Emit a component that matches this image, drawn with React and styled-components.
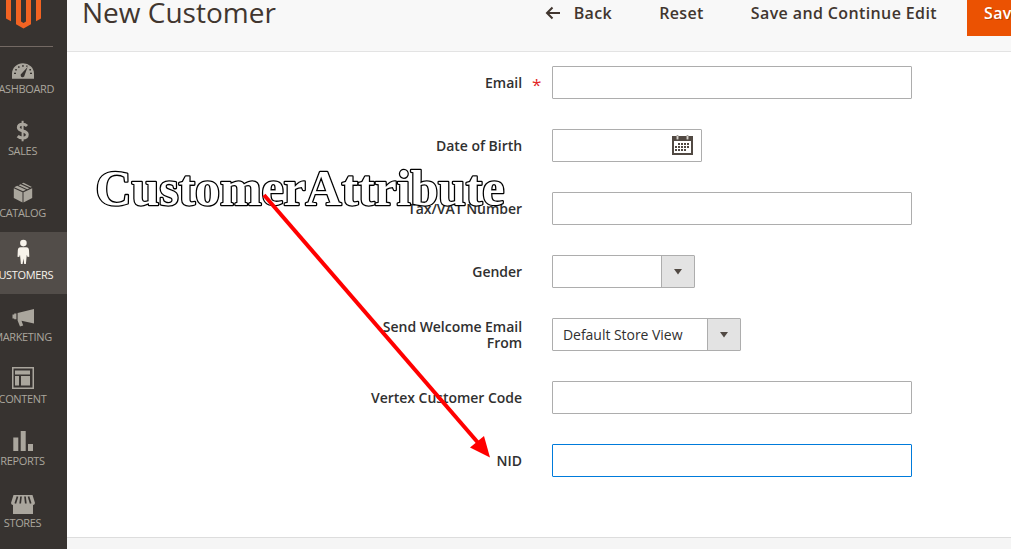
import React from 'react';
import styled, { createGlobalStyle } from 'styled-components';

const Global = createGlobalStyle`
  * { box-sizing: border-box; }
  html, body { margin: 0; height: 100%; overflow: hidden; }
  body { background: #fff; font-family: 'Open Sans', 'Noto Sans', sans-serif; color: #41362f; }
`;

const Page = styled.div`
  position: relative;
  display: flex;
  width: 1011px;
  height: 549px;
  overflow: hidden;
`;

const Sidebar = styled.nav`
  flex: none;
  width: 88px;
  margin-left: -21px;
  background: #373330;
`;

const LogoBox = styled.div`
  height: 47px;
  margin: 0 14px 0 0;
  border-bottom: 1px solid #736963;
  svg { display: block; margin-left: 26px; }
`;

const Item = styled.a`
  display: flex;
  flex-direction: column;
  align-items: center;
  height: 62px;
  padding-top: 10px;
  color: ${p => (p.$active ? '#f7f3eb' : '#aaa69d')};
  background: ${p => (p.$active ? '#524d49' : 'transparent')};
  font-size: 11px;
  line-height: 14px;
  text-transform: uppercase;
  svg { display: block; width: 28px; height: 24px; margin-bottom: 2px; overflow: visible; }
`;

const Menu = styled.div`
  margin-top: -1px;
`;

const ItemLabel = styled.span`
  margin-right: 1px;
  white-space: nowrap;
  letter-spacing: -0.35px;
`;

const Main = styled.main`
  flex: 1;
  display: flex;
  flex-direction: column;
  min-width: 0;
`;

const Header = styled.header`
  display: flex;
  flex: none;
  justify-content: space-between;
  height: 52px;
  padding-left: 15px;
  background: #f8f8f8;
  border-bottom: 1px solid #e3e3e3;
`;

const Title = styled.h1`
  margin: -7px 0 0;
  font-size: 28px;
  line-height: 38px;
  font-weight: 400;
`;

const Actions = styled.div`
  display: flex;
  align-items: flex-start;
  margin-right: -45px;
`;

const Action = styled.button`
  display: flex;
  align-items: center;
  height: 46px;
  margin-top: -10px;
  padding: 0 0 0 ${p => p.$gap}px;
  border: 0;
  background: none;
  color: #41362f;
  font: 600 16px/20px 'Open Sans', sans-serif;
  letter-spacing: 0.38px;
  white-space: nowrap;
  svg { margin-right: 13px; }
`;

const Primary = styled(Action)`
  width: 89px;
  margin-left: 30px;
  padding-left: 17px;
  background: #eb5202;
  color: #fff;
  text-shadow: 1px 1px 0 rgba(0, 0, 0, 0.25);
`;

const Form = styled.form`
  flex: 1;
  display: flex;
  flex-direction: column;
  gap: 30px;
  padding-top: 14px;
`;

const Field = styled.div`
  display: flex;
  align-items: center;
  height: 33px;
`;

const Label = styled.label`
  width: 160px;
  margin-left: 295px;
  text-align: right;
  font-size: 14px;
  line-height: 16px;
  font-weight: 600;
  letter-spacing: -0.04px;
  color: #303030;
`;

const Mark = styled.span`
  width: 30px;
  padding: 5px 0 0 10px;
  color: #e22626;
  font-size: 17px;
  line-height: 20px;
`;

const Input = styled.div`
  display: flex;
  align-items: center;
  justify-content: flex-end;
  width: ${p => p.$w || 360}px;
  height: 33px;
  padding-right: 8px;
  border: 1px solid ${p => (p.$focus ? '#007bdb' : '#adadad')};
  border-radius: 1px;
`;

const Select = styled.div`
  display: flex;
  width: ${p => p.$w}px;
  height: 33px;
  border: 1px solid #adadad;
  border-radius: 1px;
  font-size: 14px;
  line-height: 31px;
  letter-spacing: -0.04px;
  color: #303030;
`;

const Value = styled.span`
  flex: 1;
  padding-left: 10px;
  white-space: nowrap;
`;

const Toggle = styled.span`
  display: flex;
  align-items: center;
  justify-content: center;
  width: 33px;
  background: #e3e3e3;
  border-left: 1px solid #adadad;
`;

const Footer = styled.footer`
  flex: none;
  height: 12px;
  background: #f5f5f5;
  border-top: 1px solid #ddd;
`;

const Overlay = styled.svg`
  position: absolute;
  left: 0;
  top: 0;
  pointer-events: none;
`;

const icons = {
  Dashboard: (
    <svg viewBox="0 0 28 24" fill="currentColor">
      <g transform="translate(0 1.700)">
        <path d="M3 21V16a11 10.500 0 0 1 22 0v5z" />
        <g fill="#373330">
          <path d="M18.600 9.400l-3 8.200a2 2 0 1 1-3-1.700z" />
          <rect x="5" y="15" width="2" height="1.300" /><rect x="21" y="15" width="2" height="1.300" />
          <rect x="6.200" y="11.300" width="1.600" height="1.500" /><rect x="20.400" y="11.300" width="1.600" height="1.500" />
          <rect x="9" y="8.600" width="1.600" height="1.500" /><rect x="13.200" y="7.400" width="1.500" height="1.700" />
          <rect x="17.200" y="7.800" width="1.300" height="1.300" />
        </g>
      </g>
    </svg>
  ),
  Sales: (
    <svg viewBox="0 0 28 24" fill="none" stroke="currentColor">
      <g transform="translate(-.4 .8)">
        <path d="M18.400 7.200C17 5.800 15.500 5.400 14 5.400c-2.700 0-4.300 1.300-4.300 3.300 0 4.600 9 2.400 9 7 0 2.200-1.900 3.500-4.600 3.500-1.900 0-3.700-.6-5-1.900" strokeWidth="2.900" />
        <path d="M14 2v20.500" strokeWidth="2" />
      </g>
    </svg>
  ),
  Catalog: (
    <svg viewBox="0 0 28 24" fill="currentColor">
      <path d="M4.800 8.300l8.700 3.900v10.300l-8.700-4.600zM23.200 8.300l-8.700 3.900v10.300l8.700-4.600z" />
      <path d="M5.200 7.200l3-1.400 8.800 4-3 1.400zM9.600 5.200l1.900-.9 8.800 4-2 .9zM12.800 3.600l1.800-.8 8.300 4.100-1.500.7z" />
    </svg>
  ),
  Customers: (
    <svg viewBox="0 0 28 24" fill="currentColor">
      <circle cx="14.400" cy="1.100" r="3.300" />
      <path d="M11.500 5.200h5.800q2.500.2 2.700 3l.3 6.500-1.700.3-.8-2.300-.9 9.300h-1.700l-.8-5.500-.8 5.500h-1.700l-.9-9.300-.8 2.300-1.700-.3.300-6.500q.2-2.800 2.700-3z" />
    </svg>
  ),
  Marketing: (
    <svg viewBox="0 0 28 24" fill="currentColor">
      <path transform="translate(0 1.500)" d="M25 3.500v14.500l-12.500-2.700 1.700 4.600-3.200 1-2.400-6V7.400zM7.400 8v5.800H5.200v-.9H3.500V9h1.700V8z" />
    </svg>
  ),
  Content: (
    <svg viewBox="0 0 28 24" fill="currentColor">
      <path fillRule="evenodd" d="M3 1h22v22H3zM4.500 2.500v19h19v-19z" />
      <path d="M6 4.500h15v4h-15zM6 10h4v9.500h-4zM12 10h9v9.500H12z" />
    </svg>
  ),
  Reports: (
    <svg viewBox="0 0 28 24" fill="currentColor">
      <path d="M4.300 9.500h5v13.500h-5zM11.700 3h5v20h-5zM19 16h5v7h-5z" />
    </svg>
  ),
  Stores: (
    <svg viewBox="0 0 28 24" fill="currentColor">
      <path d="M4.500 5h19L26 13q-.3 2-2 2v9h-20V15Q2.300 15 2 13z" />
      <path d="M8.500 6.500L6.300 13.500M12 6.500l-.8 7M16 6.500l.8 7M19.500 6.500l2.200 7" stroke="#373330" strokeWidth="1.700" />
    </svg>
  ),
};

const Logo = () => (
  <svg width="36" height="29" viewBox="0 0 36 29" fill="#f26322">
    <path d="M1 0h5v21.300L1 18.500zM31 0h5v18.500l-5 2.800z" />
    <path d="M11 0h5v21.500l2.500 1.400 2.500-1.400V0h5v24.300l-7.500 4.300L11 24.300z" />
  </svg>
);

const Calendar = () => (
  <svg width="21" height="22" viewBox="0 0 21 22">
    <path fill="#514943" fillRule="evenodd" d="M0 1h21V20H0zM2 6v12h17v-12z" />
    <g fill="#d6d2cd" stroke="#8d867f" strokeWidth="1"><rect x="4.500" y=".5" width="2" height="4" rx="1" /><rect x="14.500" y=".5" width="2" height="4" rx="1" /></g>
    <g stroke="#514943" strokeWidth="2" strokeDasharray="2 1"><path d="M6 9h12M3 12h15M3 15h12" /></g>
  </svg>
);

const Caret = () => (
  <svg width="8" height="6" viewBox="0 0 8 6"><path d="M0 0h8L4 5.500z" fill="#514943" /></svg>
);

const SelectBox = ({ width, value }) => (
  <Select $w={width}><Value>{value}</Value><Toggle><Caret /></Toggle></Select>
);

const Row = ({ label, required, children }) => (
  <Field><Label>{label}</Label><Mark>{required ? '*' : ''}</Mark>{children}</Field>
);

export default function App() {
  return (
    <Page>
      <Global />
      <Sidebar>
        <LogoBox><Logo /></LogoBox>
        <Menu>
          {Object.keys(icons).map(name => (
            <Item key={name} $active={name === 'Customers'}>
              {icons[name]}
              <ItemLabel>{name}</ItemLabel>
            </Item>
          ))}
        </Menu>
      </Sidebar>
      <Main>
        <Header>
          <Title>New Customer</Title>
          <Actions>
            <Action $gap={0}>
              <svg width="16" height="14" viewBox="0 0 16 14" fill="none" stroke="#41362f" strokeWidth="2"><path d="M15 7H2M7.500 1.500L2 7l5.500 5.500" /></svg>
              Back
            </Action>
            <Action $gap={47}>Reset</Action>
            <Action $gap={47}>Save and Continue Edit</Action>
            <Primary>Save</Primary>
          </Actions>
        </Header>
        <Form>
          <Row label="Email" required><Input /></Row>
          <Row label="Date of Birth"><Input $w={150}><Calendar /></Input></Row>
          <Row label="Tax/VAT Number"><Input /></Row>
          <Row label="Gender"><SelectBox width={143} /></Row>
          <Row label="Send Welcome Email From"><SelectBox width={189} value="Default Store View" /></Row>
          <Row label="Vertex Customer Code"><Input /></Row>
          <Row label="NID"><Input $focus /></Row>
        </Form>
        <Footer />
      </Main>
      <Overlay width="1011" height="549">
        <text x="95.500" y="204.500" fontFamily="'Liberation Serif', serif" fontWeight="700" fontSize="50" textLength="409" fill="#fff" stroke="#000" strokeWidth="2.600" strokeLinejoin="round" paintOrder="stroke">CustomerAttribute</text>
        <path d="M264 195L480 445" stroke="#f00" strokeWidth="4" />
        <path d="M490 457.500L470 447.500L484 436z" fill="#f00" />
      </Overlay>
    </Page>
  );
}
